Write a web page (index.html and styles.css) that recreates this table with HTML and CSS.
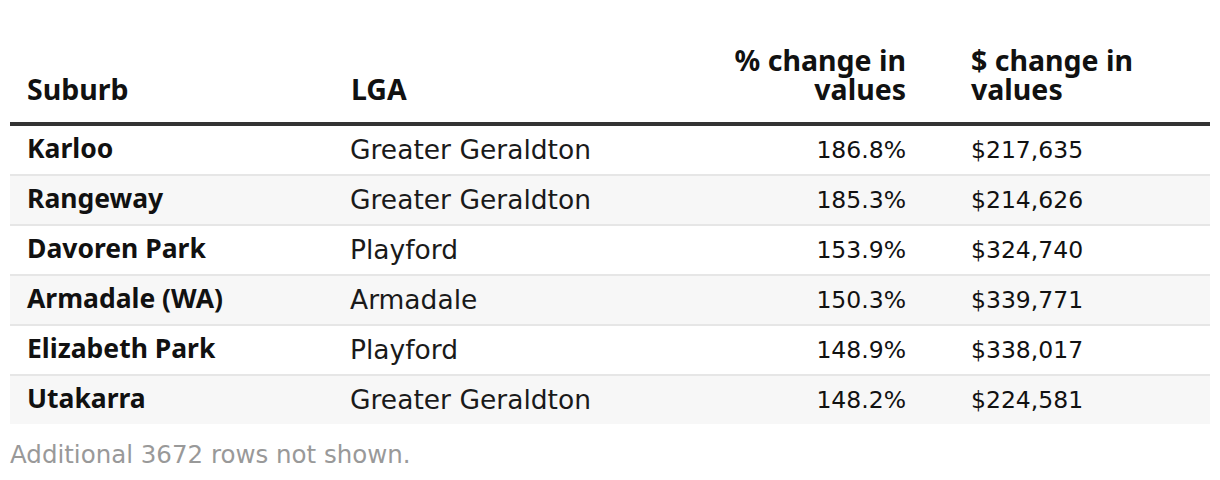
FILE: index.html
```html
<!DOCTYPE html>
<html>
<head>
<meta charset="utf-8">
<link rel="stylesheet" href="styles.css">
</head>
<body>
<div class="wrap">
  <table class="data">
    <colgroup>
      <col class="c1"><col class="c2"><col class="c3"><col class="c4">
    </colgroup>
    <thead>
      <tr>
        <th class="left">Suburb</th>
        <th class="left">LGA</th>
        <th class="right">% change in values</th>
        <th class="left dollar">$ change in values</th>
      </tr>
    </thead>
    <tbody>
      <tr><td class="name">Karloo</td><td>Greater Geraldton</td><td class="num">186.8%</td><td class="dollar num">$217,635</td></tr>
      <tr><td class="name">Rangeway</td><td>Greater Geraldton</td><td class="num">185.3%</td><td class="dollar num">$214,626</td></tr>
      <tr><td class="name">Davoren Park</td><td>Playford</td><td class="num">153.9%</td><td class="dollar num">$324,740</td></tr>
      <tr><td class="name">Armadale (WA)</td><td>Armadale</td><td class="num">150.3%</td><td class="dollar num">$339,771</td></tr>
      <tr><td class="name">Elizabeth Park</td><td>Playford</td><td class="num">148.9%</td><td class="dollar num">$338,017</td></tr>
      <tr><td class="name">Utakarra</td><td>Greater Geraldton</td><td class="num">148.2%</td><td class="dollar num">$224,581</td></tr>
    </tbody>
  </table>
  <p class="note">Additional 3672 rows not shown.</p>
</div>
</body>
</html>
```
FILE: styles.css
```css
html, body {
  margin: 0;
  padding: 0;
  background: #ffffff;
}
body {
  font-family: "DejaVu Sans", "Noto Sans", sans-serif;
  color: #1a1a1a;
}
.wrap {
  padding: 46px 10px 0 10px;
}
.data {
  width: 1200px;
  border-collapse: collapse;
  table-layout: fixed;
}
.c1 { width: 324px; }
.c2 { width: 324px; }
.c3 { width: 264px; }
.c4 { width: 288px; }
th {
  font-family: "Noto Sans", "DejaVu Sans", sans-serif;
  font-size: 28.5px;
  font-weight: 700;
  line-height: 29px;
  vertical-align: bottom;
  padding: 0 16px 18px 17px;
  border-bottom: 4px solid #333333;
  color: #111111;
}
th.left { text-align: left; }
th.right { text-align: right; }
td {
  font-size: 26.5px;
  line-height: 48px;
  padding: 0 16px 0 16px;
  border-bottom: 2px solid #e6e6e6;
  white-space: nowrap;
}
tbody tr:nth-child(even) td { background: #f7f7f7; }
tbody tr:last-child td { border-bottom: none; }
td.name {
  font-family: "Noto Sans", "DejaVu Sans", sans-serif;
  font-size: 26.5px;
  font-weight: 700;
  line-height: 44px;
  padding: 0 16px 4px 17px;
  color: #111111;
}
td.num { text-align: right; font-size: 23.5px; color: #111111; }
td.dollar, th.dollar { text-align: left; padding-left: 49px; }
.note {
  margin: 15px 0 0 0;
  font-size: 24.5px;
  color: #999999;
  line-height: 32px;
}
```
